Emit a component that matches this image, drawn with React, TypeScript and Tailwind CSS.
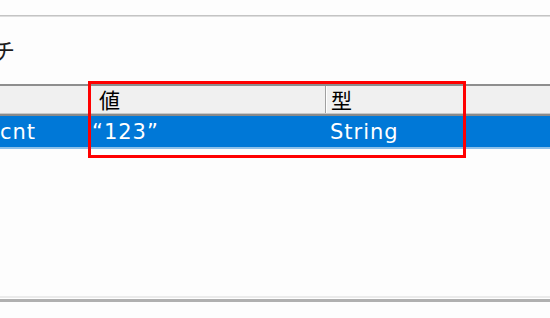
import React from 'react';

const font = { fontFamily: '"DejaVu Sans", "Noto Sans CJK JP", sans-serif' };
const cjk = { fontFamily: '"Noto Sans CJK JP", sans-serif' };

export default function App() {
    return (
        <div className="relative w-[550px] h-[318px] overflow-hidden bg-[#fdfdfd] text-black" style={font}>
            <div className="h-[15px]" />
            <div className="h-[1px] bg-[#c4c4c4]" />
            <div className="h-[1px] bg-[#dedede]" />

            {/* label, cut at the left edge like the reference */}
            <div className="flex h-[67px] items-start pt-[18px]">
                <span className="-ml-[7px] text-[22px] leading-[28px] text-[#1c1c1c]" style={cjk}>チ</span>
            </div>

            {/* list header */}
            <div className="border-t-2 border-[#8e8e8e]">
                <div className="flex h-[27px] bg-[#f0f0f0] text-[21px] leading-[27px]" style={cjk}>
                    <div className="w-[90px] shrink-0 border-r border-[#a0a0a0]" />
                    <div className="w-[236px] shrink-0 border-l border-white border-r border-r-[#a0a0a0] pl-[8px]">値</div>
                    <div className="w-[134px] shrink-0 border-l border-white pl-[4px]">型</div>
                    <div className="flex-1" />
                </div>
                <div className="h-[1px] bg-[#c8c8c8]" />
                <div className="h-[2px] bg-[#8a8a8a]" />
            </div>

            {/* selected row */}
            <div className="flex h-[31px] bg-[#0078d7] text-white text-[21px] leading-[32px] tracking-[1px]">
                <div className="w-[92px] shrink-0">cnt</div>
                <div className="w-[236px] shrink-0">“123”</div>
                <div className="flex-1 pl-[2px]">String</div>
            </div>
            <div className="h-[2px] bg-[#8cc0ea]" />

            <div className="h-[147px]" />
            <div className="h-[2px] bg-[#ebebeb]" />
            <div className="h-[1px] bg-white" />
            <div className="h-[3px] bg-[#b0b0b0]" />

            {/* highlight box */}
            <div className="absolute left-[88px] top-[81px] w-[378px] h-[77px] border-[3px] border-[#ff0000]" />
        </div>
    );
}
